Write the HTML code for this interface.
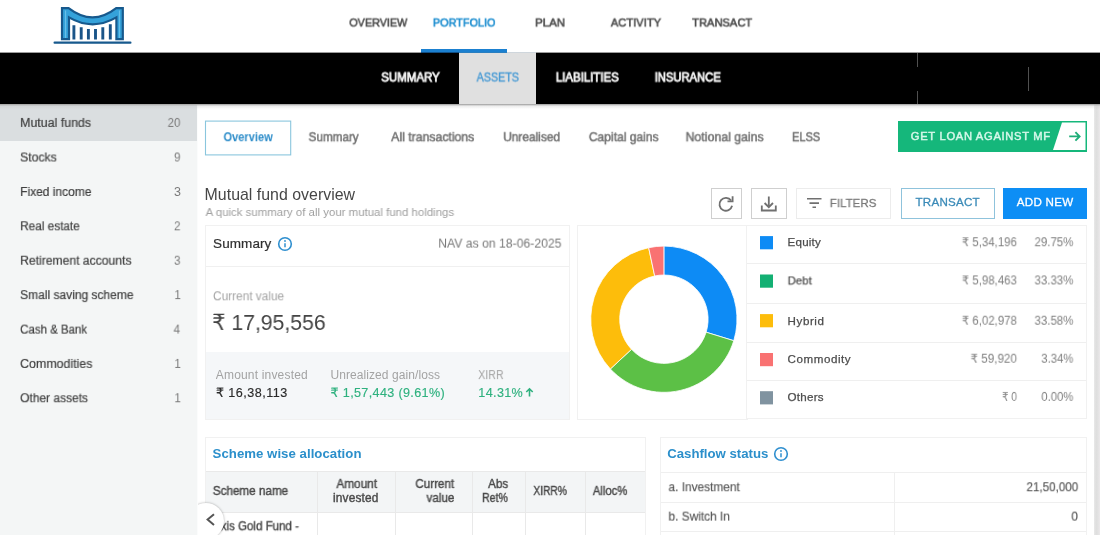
<!DOCTYPE html>
<html lang="en">
<head>
<meta charset="utf-8">
<meta name="viewport" content="width=1100">
<title>Portfolio - Assets - Mutual funds</title>
<style>
*{box-sizing:border-box;margin:0;padding:0}
html,body{width:1100px;height:535px;overflow:hidden;background:#fff}
body{position:relative;font-family:"Liberation Sans", "DejaVu Sans", sans-serif}
#app{position:absolute;left:0;top:0;width:1100px;height:535px;overflow:hidden;will-change:transform;transform:translateZ(0)}
ul{list-style:none}
a{text-decoration:none}
.b{position:absolute}
.t{position:absolute;left:0;top:0;display:block;white-space:nowrap;will-change:transform;font-family:"Liberation Sans", "DejaVu Sans", sans-serif;font-weight:400;font-style:normal;transform-origin:0 0}
.rs{font-family:"DejaVu Sans","Liberation Sans",sans-serif}
svg{position:absolute;overflow:visible}
</style>
</head>
<body>
<div id="app">
<header class="topbar">
  <div class="b" style="left:0px;top:0px;width:1100px;height:52px;background:#fff;"></div>
  <svg class="logo" style="left:53px;top:6px" width="79" height="40" viewBox="0 0 79 40">
  <path d="M9 2.1 L15.6 2.1 Q39.5 20.6 63.2 2.1 L69.8 2.1 L69.8 33.2 L63.4 33.2 L63.4 11.4 Q39.5 25.2 16 11.4 L16 33.2 L9 33.2 Z" fill="#35a2da" stroke="#17598d" stroke-width="2.2" stroke-linejoin="miter"/>
  <path d="M12.6 4.5 L12.6 32 M66.4 4.5 L66.4 32" stroke="#6cc4ec" stroke-width="1" fill="none"/>
  <g stroke="#1a5488" stroke-width="2.9">
  <path d="M20.9 19.3V33.4M28.2 21.3V33.4M35.4 22.9V33.4M42.5 22.9V33.4M49.8 21.3V33.4M57.3 18.3V33.4"/>
  </g>
  <path d="M1.6 36.7 H77.4" stroke="#17598d" stroke-width="2.2" stroke-linecap="round"/>
  </svg>
  <nav class="primary-nav">
    <a class="t" style="font-size:11.7px;line-height:16px;color:#4f4f4f;-webkit-text-stroke:0.6px #4f4f4f;transform:translate(349.30px,14.50px) scaleX(0.9227);">OVERVIEW</a>
    <a class="t" style="font-size:11.7px;line-height:16px;color:#1f8fd0;-webkit-text-stroke:0.6px #1f8fd0;transform:translate(432.90px,14.50px) scaleX(0.9281);">PORTFOLIO</a>
    <a class="t" style="font-size:11.7px;line-height:16px;color:#4f4f4f;-webkit-text-stroke:0.6px #4f4f4f;transform:translate(535.10px,14.50px) scaleX(0.9837);">PLAN</a>
    <a class="t" style="font-size:11.7px;line-height:16px;color:#4f4f4f;-webkit-text-stroke:0.6px #4f4f4f;transform:translate(610.80px,14.50px) scaleX(0.9564);">ACTIVITY</a>
    <a class="t" style="font-size:11.7px;line-height:16px;color:#4f4f4f;-webkit-text-stroke:0.6px #4f4f4f;transform:translate(692.10px,14.50px) scaleX(0.9547);">TRANSACT</a>
    <div class="b active-bar" style="left:421px;top:49px;width:86px;height:3px;background:#1b80d0;"></div>
  </nav>
</header>
<nav class="sub-nav">
  <div class="b" style="left:0px;top:52px;width:1100px;height:1px;background:#9c9c9c;"></div>
  <div class="b" style="left:0px;top:53px;width:1100px;height:51px;background:#000;"></div>
  <div class="b bar-shadow" style="left:0px;top:104px;width:1100px;height:5px;background:linear-gradient(#9a9a9a,rgba(200,200,200,.35) 40%,rgba(255,255,255,0));z-index:5"></div>
  <div class="b" style="left:421px;top:52px;width:38px;height:1px;background:#124f85;"></div>
  <div class="b active-tab" style="left:459px;top:53px;width:77px;height:51px;background:#e0e0e0;"></div>
  <div class="b" style="left:459px;top:52px;width:77px;height:1px;background:#cfd6dc;"></div>
  <div class="b" style="left:459px;top:52px;width:48px;height:1px;background:#2a7fc0;"></div>
  <div class="b" style="left:917px;top:53px;width:1px;height:14px;background:#505050;"></div>
  <div class="b" style="left:917px;top:91px;width:1px;height:13px;background:#505050;"></div>
  <div class="b" style="left:1028px;top:67px;width:1px;height:24px;background:#505050;"></div>
  <a class="t" style="font-size:12px;line-height:17px;color:#f4f4f4;-webkit-text-stroke:0.8px #f4f4f4;transform:translate(381.20px,69.50px) scaleX(0.9588);">SUMMARY</a>
  <a class="t" style="font-size:12px;line-height:17px;color:#4a9bd4;-webkit-text-stroke:0.4px #4a9bd4;transform:translate(476.60px,69.50px) scaleX(0.8955);">ASSETS</a>
  <a class="t" style="font-size:12px;line-height:17px;color:#f4f4f4;-webkit-text-stroke:0.8px #f4f4f4;transform:translate(555.80px,69.50px) scaleX(0.9542);">LIABILITIES</a>
  <a class="t" style="font-size:12px;line-height:17px;color:#f4f4f4;-webkit-text-stroke:0.8px #f4f4f4;transform:translate(654.66px,69.50px) scaleX(0.9358);">INSURANCE</a>
</nav>
<aside class="sidebar">
  <div class="b" style="left:0px;top:104px;width:197px;height:431px;background:#f4f6f6;"></div>
  <div class="b active-item" style="left:0px;top:105px;width:197px;height:35.5px;background:#dadee0;"></div>
  <div class="b" style="left:197px;top:104px;width:1px;height:431px;background:#fbfcfc;"></div>
  <ul>
    <li>
      <a class="t" style="font-size:12.5px;line-height:18px;color:#404040;-webkit-text-stroke:0.2px #404040;transform:translate(20.11px,113.90px) scaleX(0.9912);">Mutual funds</a>
      <span class="t" style="font-size:12.5px;line-height:18px;color:#7a7a7a;transform:translate(167.60px,113.90px) scaleX(0.9174);">20</span>
    </li>
    <li>
      <a class="t" style="font-size:12.5px;line-height:18px;color:#404040;-webkit-text-stroke:0.2px #404040;transform:translate(20.12px,148.50px) scaleX(0.9763);">Stocks</a>
      <span class="t" style="font-size:12.5px;line-height:18px;color:#7a7a7a;transform:translate(174.00px,148.50px) scaleX(0.9300);">9</span>
    </li>
    <li>
      <a class="t" style="font-size:12.5px;line-height:18px;color:#404040;-webkit-text-stroke:0.2px #404040;transform:translate(20.14px,183.00px) scaleX(0.9594);">Fixed income</a>
      <span class="t" style="font-size:12.5px;line-height:18px;color:#7a7a7a;transform:translate(174.00px,183.00px) scaleX(0.9300);">3</span>
    </li>
    <li>
      <a class="t" style="font-size:12.5px;line-height:18px;color:#404040;-webkit-text-stroke:0.2px #404040;transform:translate(20.15px,217.30px) scaleX(0.9426);">Real estate</a>
      <span class="t" style="font-size:12.5px;line-height:18px;color:#7a7a7a;transform:translate(174.00px,217.30px) scaleX(0.9300);">2</span>
    </li>
    <li>
      <a class="t" style="font-size:12.5px;line-height:18px;color:#404040;-webkit-text-stroke:0.2px #404040;transform:translate(20.13px,251.70px) scaleX(0.9710);">Retirement accounts</a>
      <span class="t" style="font-size:12.5px;line-height:18px;color:#7a7a7a;transform:translate(174.00px,251.70px) scaleX(0.9300);">3</span>
    </li>
    <li>
      <a class="t" style="font-size:12.5px;line-height:18px;color:#404040;-webkit-text-stroke:0.2px #404040;transform:translate(20.14px,286.10px) scaleX(0.9595);">Small saving scheme</a>
      <span class="t" style="font-size:12.5px;line-height:18px;color:#7a7a7a;transform:translate(174.40px,286.10px) scaleX(0.9300);">1</span>
    </li>
    <li>
      <a class="t" style="font-size:12.5px;line-height:18px;color:#404040;-webkit-text-stroke:0.2px #404040;transform:translate(20.18px,320.60px) scaleX(0.9161);">Cash &amp; Bank</a>
      <span class="t" style="font-size:12.5px;line-height:18px;color:#7a7a7a;transform:translate(173.60px,320.60px) scaleX(0.9300);">4</span>
    </li>
    <li>
      <a class="t" style="font-size:12.5px;line-height:18px;color:#404040;-webkit-text-stroke:0.2px #404040;transform:translate(20.11px,354.90px) scaleX(0.9904);">Commodities</a>
      <span class="t" style="font-size:12.5px;line-height:18px;color:#7a7a7a;transform:translate(174.40px,354.90px) scaleX(0.9300);">1</span>
    </li>
    <li>
      <a class="t" style="font-size:12.5px;line-height:18px;color:#404040;-webkit-text-stroke:0.2px #404040;transform:translate(20.14px,389.20px) scaleX(0.9568);">Other assets</a>
      <span class="t" style="font-size:12.5px;line-height:18px;color:#7a7a7a;transform:translate(174.40px,389.20px) scaleX(0.9300);">1</span>
    </li>
  </ul>
</aside>
<main class="content">
  <div class="b" style="left:198px;top:104px;width:902px;height:431px;background:#fff;"></div>
  <div class="b scrollbar" style="left:1094px;top:104px;width:6px;height:431px;background:#e3e3e3;background:linear-gradient(90deg,#e9e9e9,#dedede 35%,#e2e2e2 65%,#ebe8ea)"></div>
  <nav class="tabs">
    <svg style="left:0;top:0" width="1100" height="535" viewBox="0 0 1100 535"><rect x="205.5" y="121.1" width="85.2" height="33.8" fill="#fff" stroke="#8ac6dd" stroke-width="1.1"/></svg>
    <a class="t" style="font-size:12.6px;line-height:18px;color:#2c8cc9;font-weight:700;transform:translate(223.50px,128.20px) scaleX(0.8770);">Overview</a>
    <a class="t" style="font-size:12.6px;line-height:18px;color:#727272;-webkit-text-stroke:0.5px #727272;transform:translate(308.55px,128.20px) scaleX(0.9289);">Summary</a>
    <a class="t" style="font-size:12.6px;line-height:18px;color:#727272;-webkit-text-stroke:0.5px #727272;transform:translate(391.15px,128.20px) scaleX(0.9742);">All transactions</a>
    <a class="t" style="font-size:12.6px;line-height:18px;color:#727272;-webkit-text-stroke:0.5px #727272;transform:translate(503.25px,128.20px) scaleX(0.9419);">Unrealised</a>
    <a class="t" style="font-size:12.6px;line-height:18px;color:#727272;-webkit-text-stroke:0.5px #727272;transform:translate(588.85px,128.20px) scaleX(0.9571);">Capital gains</a>
    <a class="t" style="font-size:12.6px;line-height:18px;color:#727272;-webkit-text-stroke:0.5px #727272;transform:translate(685.57px,128.20px) scaleX(0.9782);">Notional gains</a>
    <a class="t" style="font-size:12.6px;line-height:18px;color:#727272;-webkit-text-stroke:0.5px #727272;transform:translate(791.97px,128.20px) scaleX(0.8765);">ELSS</a>
  </nav>
  <div class="loan-btn" role="button">
    <div class="b" style="left:898px;top:121px;width:189px;height:30.5px;background:#15b77b;"></div>
    <svg style="left:898px;top:121px" width="189" height="31" viewBox="0 0 189 31">
    <path d="M164 1.5 H187.5 V29 H155 Z" fill="#fff"/>
    <path d="M171.2 15.4 H181.6 M177.4 11.2 L181.6 15.4 L177.4 19.6" stroke="#1fae78" stroke-width="1.9" fill="none"/>
    </svg>
    <span class="t" style="font-size:11.2px;line-height:16px;color:#d6f8ea;-webkit-text-stroke:0.45px #d6f8ea;letter-spacing:0.685px;transform:translate(910.83px,127.50px);">GET LOAN AGAINST MF</span>
  </div>
  <div class="page-head">
    <h1 class="t" style="font-size:15.9px;line-height:22px;color:#464646;letter-spacing:0.017px;transform:translate(204.60px,183.90px);">Mutual fund overview</h1>
    <p class="t" style="font-size:11.5px;line-height:16px;color:#a0a0a0;transform:translate(205.60px,204.00px) scaleX(0.9944);">A quick summary of all your mutual fund holdings</p>
    <div class="actions">
      <div class="b icon-btn" style="left:711px;top:188px;width:31px;height:30.5px;background:#fff;border:1px solid #cfcfcf;"></div>
      <div class="b icon-btn" style="left:751px;top:188px;width:36px;height:30.5px;background:#fff;border:1px solid #cfcfcf;"></div>
      <div class="b btn" style="left:796px;top:188px;width:95px;height:30.5px;background:#fff;border:1px solid #ececec;"></div>
      <div class="b btn" style="left:901px;top:188px;width:94px;height:31px;background:#fff;border:1px solid #8fc3dc;"></div>
      <div class="b btn" style="left:1003px;top:188px;width:84px;height:31px;background:#0d8ef5;"></div>
      <svg style="left:711px;top:188px" width="180" height="31" viewBox="0 0 180 31">
      <path d="M20.1 12.6 A6.4 6.4 0 1 0 21.1 17.8" stroke="#707070" stroke-width="1.8" fill="none"/>
      <path d="M21.6 8.2 V13.3 H16.5" stroke="#707070" stroke-width="1.8" fill="none"/>
      <path d="M57.8 8.5 V19 M53.6 15 L57.8 19.2 L62 15" stroke="#707070" stroke-width="1.8" fill="none"/>
      <path d="M50.8 17.5 V22.5 H64.8 V17.5" stroke="#707070" stroke-width="1.8" fill="none"/>
      <path d="M96 10.8 H110.5 M98.5 15.1 H108 M101.5 19.3 H105" stroke="#707070" stroke-width="1.6" fill="none"/>
      </svg>
      <span class="t" style="font-size:11.8px;line-height:17px;color:#7a7a7a;-webkit-text-stroke:0.3px #7a7a7a;transform:translate(829.75px,195.00px) scaleX(0.9798);">FILTERS</span>
      <span class="t" style="font-size:11.6px;line-height:16px;color:#3b8bb8;-webkit-text-stroke:0.3px #3b8bb8;letter-spacing:0.229px;transform:translate(915.55px,194.40px);">TRANSACT</span>
      <span class="t" style="font-size:11.6px;line-height:16px;color:#fff;-webkit-text-stroke:0.3px #fff;letter-spacing:0.266px;transform:translate(1016.75px,194.40px);">ADD NEW</span>
    </div>
  </div>
  <section class="summary-card">
    <div class="b" style="left:205px;top:225px;width:365px;height:195px;background:#fff;border:1px solid #f1f1f1;"></div>
    <div class="b" style="left:206px;top:266px;width:363px;height:1px;background:#f0f0f0;"></div>
    <div class="b" style="left:206px;top:352px;width:363px;height:67px;background:#f5f7f9;"></div>
    <h2 class="t" style="font-size:13.5px;line-height:19px;color:#303030;-webkit-text-stroke:0.2px #303030;letter-spacing:0.082px;transform:translate(213.10px,234.30px);">Summary</h2>
    <svg class="info-icon" style="left:276.8px;top:236.2px" width="16" height="16" viewBox="0 0 16 16">
    <circle cx="8" cy="8" r="6.3" fill="none" stroke="#2f8fcf" stroke-width="1.6"/>
    <path d="M8 7.2 V11.3" stroke="#2f8fcf" stroke-width="1.5"/><circle cx="8" cy="5" r="0.9" fill="#2f8fcf"/></svg>
    <span class="t" style="font-size:12.6px;line-height:18px;color:#777;transform:translate(438.23px,234.60px) scaleX(0.9684);">NAV as on 18-06-2025</span>
    <span class="t" style="font-size:12px;line-height:17px;color:#a3a3a3;transform:translate(213.00px,288.30px) scaleX(0.9881);">Current value</span>
    <span class="t" style="font-size:22.4px;line-height:31px;color:#444;transform:translate(212.05px,307.00px) scaleX(0.9450);"><span class="rs">₹</span> 17,95,556</span>
    <span class="t" style="font-size:12px;line-height:17px;color:#a3a3a3;letter-spacing:0.178px;transform:translate(215.80px,367.10px);">Amount invested</span>
    <span class="t" style="font-size:12.6px;line-height:18px;color:#2a2a2a;-webkit-text-stroke:0.15px #2a2a2a;letter-spacing:0.475px;transform:translate(215.88px,383.70px);"><span class="rs">₹</span> 16,38,113</span>
    <span class="t" style="font-size:12px;line-height:17px;color:#a3a3a3;letter-spacing:0.076px;transform:translate(330.50px,367.10px);">Unrealized gain/loss</span>
    <span class="t" style="font-size:12.6px;line-height:18px;color:#2fb17f;-webkit-text-stroke:0.15px #2fb17f;letter-spacing:0.348px;transform:translate(330.57px,383.70px);"><span class="rs">₹</span> 1,57,443 (9.61%)</span>
    <span class="t" style="font-size:12px;line-height:17px;color:#a3a3a3;transform:translate(478.20px,367.10px) scaleX(0.8895);">XIRR</span>
    <span class="t" style="font-size:12.6px;line-height:18px;color:#2fb17f;-webkit-text-stroke:0.15px #2fb17f;letter-spacing:0.367px;transform:translate(478.27px,383.70px);">14.31%</span>
    <svg style="left:524px;top:386px" width="11" height="12" viewBox="0 0 11 12">
    <path d="M5.5 10.4 V3 M2.3 6 L5.5 2.8 L8.7 6" stroke="#2fb17f" stroke-width="1.6" fill="none"/></svg>
  </section>
  <section class="allocation-card">
    <div class="b" style="left:577px;top:225px;width:171px;height:195px;background:#fff;border:1px solid #f1f1f1;"></div>
    <svg class="donut" style="left:0;top:0" width="1100" height="535" viewBox="0 0 1100 535">
    <path d="M663.90 246.10 A73.1 73.1 0 0 1 733.77 340.69 L706.15 332.20 A44.2 44.2 0 0 0 663.90 275.00 Z" fill="#0d8bf5" stroke="#fff" stroke-width="0.8"/>
    <path d="M733.77 340.69 A73.1 73.1 0 0 1 610.36 368.97 L631.53 349.29 A44.2 44.2 0 0 0 706.15 332.20 Z" fill="#5cc046" stroke="#fff" stroke-width="0.8"/>
    <path d="M610.36 368.97 A73.1 73.1 0 0 1 648.67 247.70 L654.69 275.97 A44.2 44.2 0 0 0 631.53 349.29 Z" fill="#fdbd0b" stroke="#fff" stroke-width="0.8"/>
    <path d="M648.67 247.70 A73.1 73.1 0 0 1 663.90 246.10 L663.90 275.00 A44.2 44.2 0 0 0 654.69 275.97 Z" fill="#f97272" stroke="#fff" stroke-width="0.8"/>
    </svg>
    <div class="b" style="left:746px;top:225px;width:341px;height:194px;background:#fff;border:1px solid #f1f1f1;"></div>
    <ul class="legend">
      <li>
        <svg style="left:0;top:0" width="1100" height="535" viewBox="0 0 1100 535"><rect x="760" y="236.1" width="13" height="13.2" fill="#0d8bf5"/></svg>
        <span class="t" style="font-size:11.6px;line-height:16px;color:#4c4c4c;-webkit-text-stroke:0.25px #4c4c4c;letter-spacing:0.185px;transform:translate(787.62px,234.20px);">Equity</span>
        <span class="t" style="font-size:12px;line-height:17px;color:#808080;transform:translate(961.80px,234.20px) scaleX(0.9551);"><span class="rs">₹</span> 5,34,196</span>
        <span class="t" style="font-size:12px;line-height:17px;color:#808080;transform:translate(1034.50px,234.20px) scaleX(0.9554);">29.75%</span>
      </li>
      <li>
        <div class="b" style="left:747px;top:263px;width:339px;height:1px;background:#efefef;"></div>
        <svg style="left:0;top:0" width="1100" height="535" viewBox="0 0 1100 535"><rect x="760" y="274.5" width="13" height="13.2" fill="#13b073"/></svg>
        <span class="t" style="font-size:11.6px;line-height:16px;color:#4c4c4c;-webkit-text-stroke:0.25px #4c4c4c;transform:translate(787.64px,272.40px) scaleX(0.9869);">Debt</span>
        <span class="t" style="font-size:12px;line-height:17px;color:#808080;transform:translate(961.80px,272.40px) scaleX(0.9551);"><span class="rs">₹</span> 5,98,463</span>
        <span class="t" style="font-size:12px;line-height:17px;color:#808080;transform:translate(1034.50px,272.40px) scaleX(0.9554);">33.33%</span>
      </li>
      <li>
        <div class="b" style="left:747px;top:303px;width:339px;height:1px;background:#efefef;"></div>
        <svg style="left:0;top:0" width="1100" height="535" viewBox="0 0 1100 535"><rect x="760" y="314.1" width="13" height="13.2" fill="#fdbd0b"/></svg>
        <span class="t" style="font-size:11.6px;line-height:16px;color:#4c4c4c;-webkit-text-stroke:0.25px #4c4c4c;letter-spacing:0.559px;transform:translate(787.62px,312.70px);">Hybrid</span>
        <span class="t" style="font-size:12px;line-height:17px;color:#808080;transform:translate(961.80px,312.70px) scaleX(0.9551);"><span class="rs">₹</span> 6,02,978</span>
        <span class="t" style="font-size:12px;line-height:17px;color:#808080;transform:translate(1034.50px,312.70px) scaleX(0.9554);">33.58%</span>
      </li>
      <li>
        <div class="b" style="left:747px;top:342px;width:339px;height:1px;background:#efefef;"></div>
        <svg style="left:0;top:0" width="1100" height="535" viewBox="0 0 1100 535"><rect x="760" y="353.0" width="13" height="13.2" fill="#f97272"/></svg>
        <span class="t" style="font-size:11.6px;line-height:16px;color:#4c4c4c;-webkit-text-stroke:0.25px #4c4c4c;letter-spacing:0.553px;transform:translate(787.62px,350.70px);">Commodity</span>
        <span class="t" style="font-size:12px;line-height:17px;color:#808080;transform:translate(970.50px,350.70px) scaleX(0.9730);"><span class="rs">₹</span> 59,920</span>
        <span class="t" style="font-size:12px;line-height:17px;color:#808080;transform:translate(1041.30px,350.70px) scaleX(0.9431);">3.34%</span>
      </li>
      <li>
        <div class="b" style="left:747px;top:380px;width:339px;height:1px;background:#efefef;"></div>
        <svg style="left:0;top:0" width="1100" height="535" viewBox="0 0 1100 535"><rect x="760" y="391.2" width="13" height="13.2" fill="#8093a0"/></svg>
        <span class="t" style="font-size:11.6px;line-height:16px;color:#4c4c4c;-webkit-text-stroke:0.25px #4c4c4c;letter-spacing:0.231px;transform:translate(787.62px,388.90px);">Others</span>
        <span class="t" style="font-size:12px;line-height:17px;color:#808080;transform:translate(1002.00px,388.90px) scaleX(0.8459);"><span class="rs">₹</span> 0</span>
        <span class="t" style="font-size:12px;line-height:17px;color:#808080;transform:translate(1041.30px,388.90px) scaleX(0.9431);">0.00%</span>
      </li>
    </ul>
  </section>
  <section class="scheme-card">
    <div class="b" style="left:205px;top:437px;width:441px;height:110px;background:#fff;border:1px solid #f1f1f1;"></div>
    <h2 class="t" style="font-size:13.2px;line-height:18px;color:#2b8fcb;font-weight:700;letter-spacing:0.038px;transform:translate(212.60px,445.00px);">Scheme wise allocation</h2>
    <div class="b thead" style="left:206px;top:471px;width:439px;height:41.5px;background:#f3f5f6;"></div>
    <div class="b" style="left:206px;top:471px;width:439px;height:1px;background:#e9e9e9;"></div>
    <div class="b" style="left:206px;top:512px;width:439px;height:1px;background:#e9e9e9;"></div>
    <div class="b" style="left:317px;top:471px;width:1px;height:64px;background:#e9e9e9;"></div>
    <div class="b" style="left:395px;top:471px;width:1px;height:64px;background:#e9e9e9;"></div>
    <div class="b" style="left:472px;top:471px;width:1px;height:64px;background:#e9e9e9;"></div>
    <div class="b" style="left:525px;top:471px;width:1px;height:64px;background:#e9e9e9;"></div>
    <div class="b" style="left:585px;top:471px;width:1px;height:64px;background:#e9e9e9;"></div>
    <span class="t" style="font-size:11.9px;line-height:17px;color:#4a4a4a;-webkit-text-stroke:0.4px #4a4a4a;transform:translate(212.80px,483.00px) scaleX(0.9824);">Scheme name</span>
    <span class="t" style="font-size:11.9px;line-height:17px;color:#4a4a4a;-webkit-text-stroke:0.4px #4a4a4a;transform:translate(336.40px,476.00px) scaleX(0.9934);">Amount</span>
    <span class="t" style="font-size:11.9px;line-height:17px;color:#4a4a4a;-webkit-text-stroke:0.4px #4a4a4a;letter-spacing:0.175px;transform:translate(332.90px,490.00px);">invested</span>
    <span class="t" style="font-size:11.9px;line-height:17px;color:#4a4a4a;-webkit-text-stroke:0.4px #4a4a4a;transform:translate(415.40px,476.00px) scaleX(0.9766);">Current</span>
    <span class="t" style="font-size:11.9px;line-height:17px;color:#4a4a4a;-webkit-text-stroke:0.4px #4a4a4a;transform:translate(426.50px,490.00px) scaleX(0.9822);">value</span>
    <span class="t" style="font-size:11.9px;line-height:17px;color:#4a4a4a;-webkit-text-stroke:0.4px #4a4a4a;transform:translate(488.10px,476.00px) scaleX(0.9784);">Abs</span>
    <span class="t" style="font-size:11.9px;line-height:17px;color:#4a4a4a;-webkit-text-stroke:0.4px #4a4a4a;transform:translate(482.10px,490.00px) scaleX(0.8846);">Ret%</span>
    <span class="t" style="font-size:11.9px;line-height:17px;color:#4a4a4a;-webkit-text-stroke:0.4px #4a4a4a;transform:translate(533.40px,483.00px) scaleX(0.8577);">XIRR%</span>
    <span class="t" style="font-size:11.9px;line-height:17px;color:#4a4a4a;-webkit-text-stroke:0.4px #4a4a4a;transform:translate(592.80px,483.00px) scaleX(0.9518);">Alloc%</span>
    <span class="t" style="font-size:12.6px;line-height:18px;color:#4a4a4a;-webkit-text-stroke:0.4px #4a4a4a;transform:translate(213.00px,517.20px) scaleX(0.9167);">Axis Gold Fund -</span>
  </section>
  <section class="cashflow-card">
    <div class="b" style="left:660px;top:437px;width:427px;height:110px;background:#fff;border:1px solid #f1f1f1;"></div>
    <h2 class="t" style="font-size:13.2px;line-height:18px;color:#2b8fcb;font-weight:700;transform:translate(667.20px,445.00px);">Cashflow status</h2>
    <svg class="info-icon" style="left:773px;top:446.3px" width="16" height="16" viewBox="0 0 16 16">
    <circle cx="8" cy="8" r="6.3" fill="none" stroke="#2f8fcf" stroke-width="1.6"/>
    <path d="M8 7.2 V11.3" stroke="#2f8fcf" stroke-width="1.5"/><circle cx="8" cy="5" r="0.9" fill="#2f8fcf"/></svg>
    <div class="b" style="left:661px;top:472px;width:425px;height:1px;background:#efefef;"></div>
    <div class="b" style="left:661px;top:502px;width:425px;height:1px;background:#efefef;"></div>
    <div class="b" style="left:661px;top:531px;width:425px;height:1px;background:#efefef;"></div>
    <div class="b" style="left:894px;top:472px;width:1px;height:63px;background:#efefef;"></div>
    <span class="t" style="font-size:12.6px;line-height:18px;color:#555;-webkit-text-stroke:0.15px #555;transform:translate(668.48px,478.20px) scaleX(0.9441);">a. Investment</span>
    <span class="t" style="font-size:12.6px;line-height:18px;color:#555;-webkit-text-stroke:0.15px #555;transform:translate(1026.48px,478.20px) scaleX(0.9237);">21,50,000</span>
    <span class="t" style="font-size:12.6px;line-height:18px;color:#555;-webkit-text-stroke:0.15px #555;transform:translate(668.48px,507.60px) scaleX(0.9440);">b. Switch In</span>
    <span class="t" style="font-size:12.6px;line-height:18px;color:#555;-webkit-text-stroke:0.15px #555;transform:translate(1071.38px,507.60px) scaleX(0.9300);">0</span>
  </section>
  <div class="collapse-btn" role="button">
    <div class="b" style="left:198px;top:495px;width:40px;height:40px;overflow:hidden"><div class="b" style="left:-9.6px;top:7.8px;width:36px;height:36px;border-radius:50%;background:#fff;box-shadow:0 0 2.5px rgba(0,0,0,.35)"></div></div>
    <svg style="left:204px;top:511px" width="14" height="18" viewBox="0 0 14 18"><path d="M10 3.2 L3.6 8.6 L10 14" stroke="#555" stroke-width="2" fill="none"/></svg>
  </div>
</main>
</div>
</body>
</html>
